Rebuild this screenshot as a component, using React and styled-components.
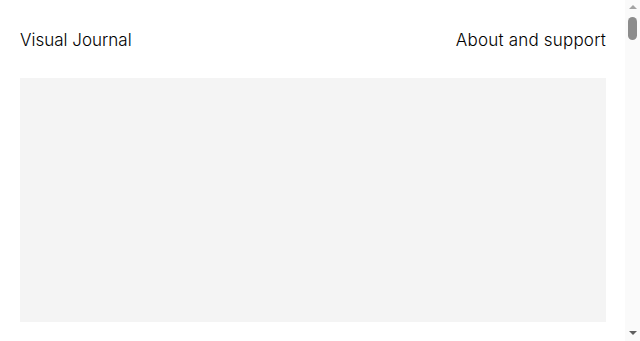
import React from 'react';
import styled, { createGlobalStyle } from 'styled-components';

const Global = createGlobalStyle`
  html, body {
    margin: 0;
    padding: 0;
    background: #ffffff;
  }
  body {
    font-family: Inter, "Noto Sans", sans-serif;
    color: #111111;
  }
`;

const Page = styled.div`
  padding: 0 34px 0 20px;
`;

const Header = styled.header`
  display: flex;
  justify-content: space-between;
  align-items: center;
  height: 78px;
  padding-top: 2px;
  box-sizing: border-box;
`;

const NavLink = styled.a`
  font-size: 17px;
  line-height: 24px;
  font-weight: 350;
  letter-spacing: ${(p) => (p.$wide ? '0.2px' : '0px')};
  color: #000000;
  text-decoration: none;
`;

const Feed = styled.main`
  display: flex;
  flex-direction: column;
  gap: 40px;
  padding-bottom: 40px;
`;

const Entry = styled.div`
  background: #f4f4f4;
  height: 244px;
`;

/* fake scroll rail, drawn over the right edge */
const Rail = styled.div`
  position: fixed;
  top: 0;
  right: 0;
  bottom: 0;
  width: 15px;
  background: #fafafa;
  display: flex;
  flex-direction: column;
  align-items: center;
`;

const Arrow = styled.div`
  width: 0;
  height: 0;
  border-left: 4px solid transparent;
  border-right: 4px solid transparent;
  ${(p) =>
    p.$down
      ? `border-top: 4px solid #5f5f5f; margin: auto 0 6px;`
      : `border-bottom: 4px solid #a3a3a3; margin-top: 5px;`}
`;

const Thumb = styled.div`
  width: 9px;
  height: 23px;
  margin-top: 8px;
  border-radius: 5px;
  background: #8c8c8c;
`;

const entries = Array.from({ length: 17 }, (_, i) => i);

const App = () => {
  return (
    <Page>
      <Global />
      <Header>
        <NavLink href="#">Visual Journal</NavLink>
        <NavLink href="#" $wide>About and support</NavLink>
      </Header>
      <Feed>
        {entries.map((i) => (
          <Entry key={i} />
        ))}
      </Feed>
      <Rail>
        <Arrow />
        <Thumb />
        <Arrow $down />
      </Rail>
    </Page>
  );
};

export default App;
